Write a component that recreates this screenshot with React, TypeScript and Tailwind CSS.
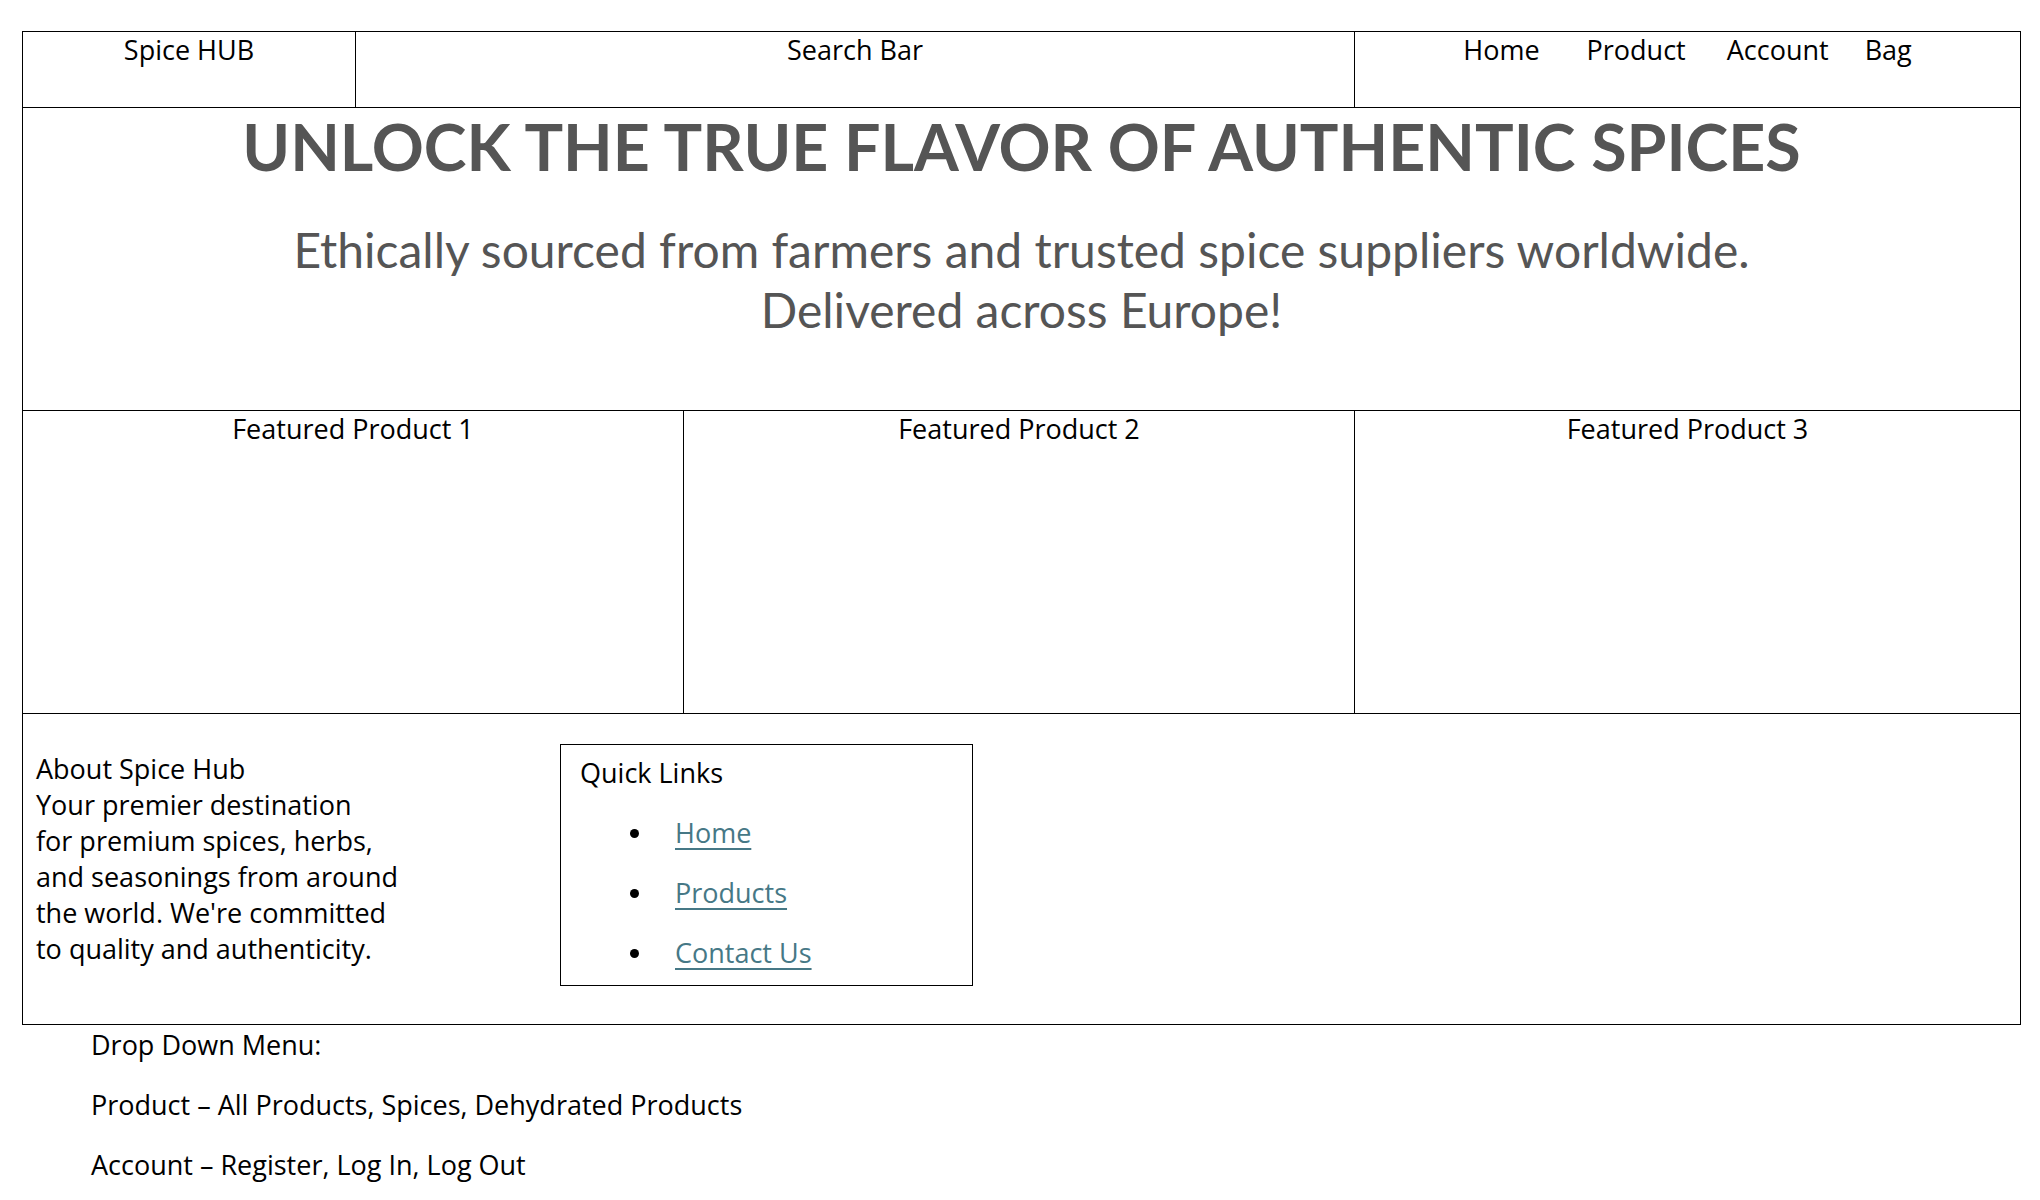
import React from 'react';

const body = "font-['Open_Sans',sans-serif] text-[27px] text-black";

const quickLinks = ['Home', 'Products', 'Contact Us'];
const navItems = [
  { label: 'Home', gap: '' },
  { label: 'Product', gap: 'ml-[47px]' },
  { label: 'Account', gap: 'ml-[41px]' },
  { label: 'Bag', gap: 'ml-[36px]' },
];

const App: React.FC = () => {
  return (
    <div className={`min-h-[1200px] bg-white pt-[31px] pl-[22px] ${body}`}>
      <div className="w-[1999px] border border-black">
        {/* header row */}
        <header className="grid h-[76px] grid-cols-[333px_999px_1fr] border-b border-black leading-[36px]">
          <div className="border-r border-black text-center">Spice HUB</div>
          <div className="border-r border-black text-center">Search Bar</div>
          <nav className="flex justify-center">
            {navItems.map((item) => (
              <span key={item.label} className={item.gap}>
                {item.label}
              </span>
            ))}
          </nav>
        </header>

        {/* hero */}
        <section className="h-[303px] border-b border-black text-center font-['Lato',sans-serif] text-[#555555]">
          <h1 className="text-[64.5px] font-bold leading-[76px]">
            UNLOCK THE TRUE FLAVOR OF AUTHENTIC SPICES
          </h1>
          <p className="mt-[36px] text-[48px] leading-[60px]">
            Ethically sourced from farmers and trusted spice suppliers worldwide.
            <br />
            Delivered across Europe!
          </p>
        </section>

        {/* featured products */}
        <section className="grid h-[303px] grid-cols-[661px_671px_1fr] border-b border-black leading-[36px]">
          <div className="border-r border-black text-center">Featured Product 1</div>
          <div className="border-r border-black text-center">Featured Product 2</div>
          <div className="text-center">Featured Product 3</div>
        </section>

        {/* footer */}
        <footer className="flex h-[310px] items-start pt-[30px]">
          <div className="w-[537px] pl-[13px] pt-[7px] leading-[36px]">
            About Spice Hub
            <br />
            Your premier destination
            <br />
            for premium spices, herbs,
            <br />
            and seasonings from around
            <br />
            the world. We're committed
            <br />
            to quality and authenticity.
          </div>
          <div className="h-[242px] w-[413px] border border-black px-[19px] pt-[10px]">
            <h3 className="leading-[36px]">Quick Links</h3>
            <ul className="mt-[24px] flex flex-col gap-[24px]">
              {quickLinks.map((link) => (
                <li key={link} className="flex items-center leading-[36px]">
                  <span className="ml-[50px] mr-[36px] h-[9px] w-[9px] rounded-full bg-black"></span>
                  <a href="#" className="text-[#467886] underline underline-offset-[5px]">
                    {link}
                  </a>
                </li>
              ))}
            </ul>
          </div>
        </footer>
      </div>

      {/* notes under the wireframe */}
      <div className="flex flex-col gap-[24px] pl-[69px] pt-[2px] leading-[36px]">
        <p>Drop Down Menu:</p>
        <p>Product – All Products, Spices, Dehydrated Products</p>
        <p>Account – Register, Log In, Log Out</p>
      </div>
    </div>
  );
};

export default App;
